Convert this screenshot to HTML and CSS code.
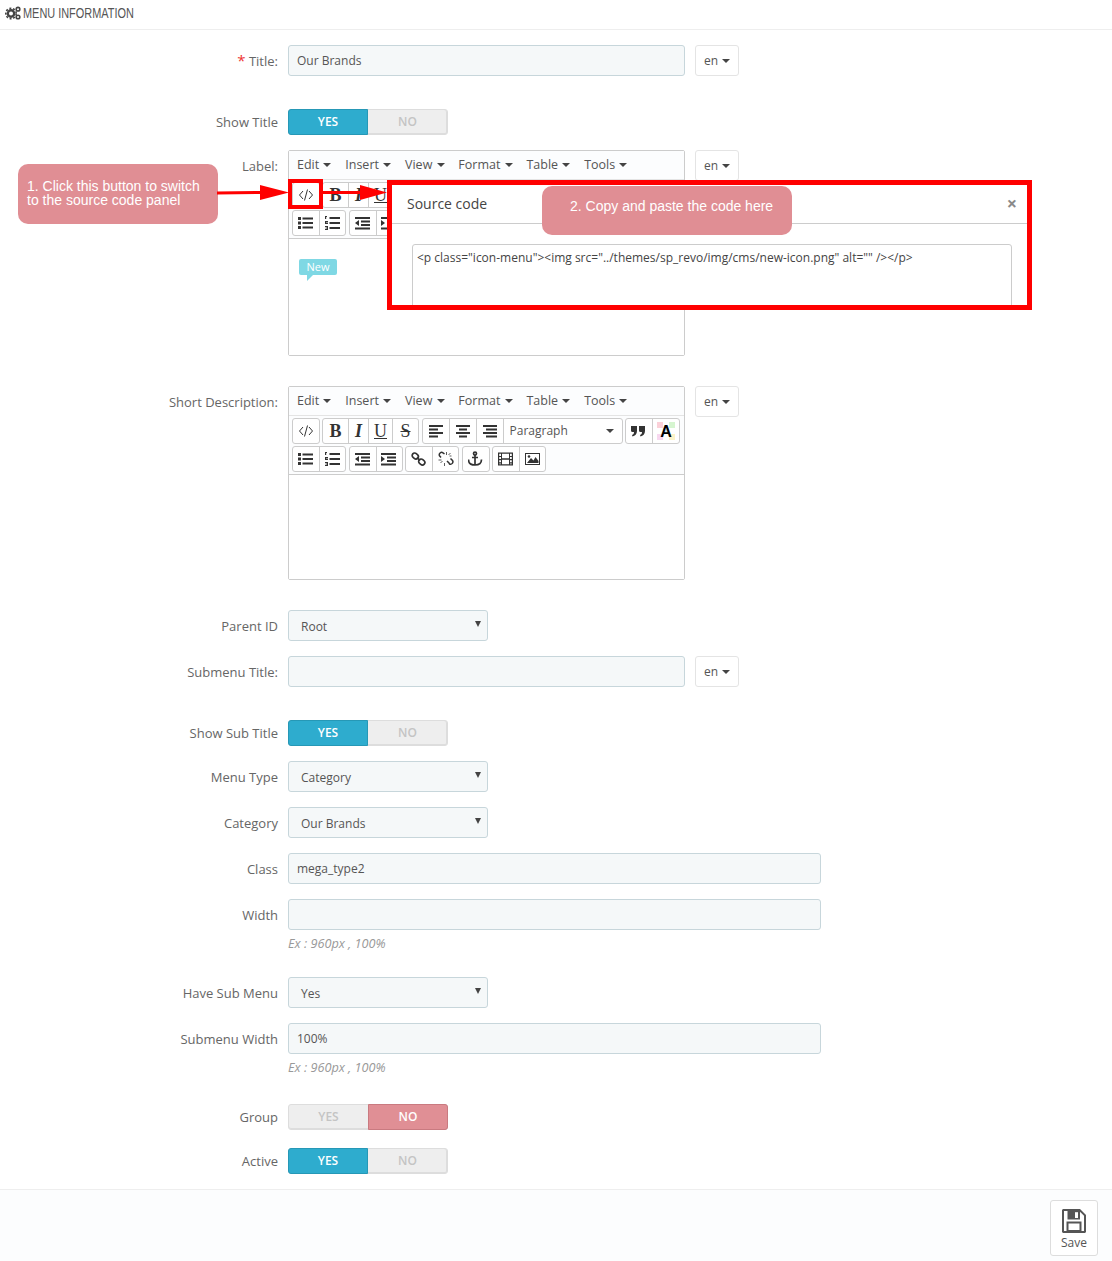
FILE: index.html
```html
<!DOCTYPE html>
<html>
    <head>
        <meta charset="utf-8">
        <title>Menu information</title>
        <link rel="stylesheet" href="styles.css">
    </head>
    <body>
        <svg class="defs" width="0" height="0">
            <symbol id="i-code" viewBox="0 0 16 16"><path d="M5 4 1.500 8 5 12M11 4l3.500 4L11 12M9.500 2.500l-3 11" fill="none" stroke="currentColor" stroke-width="1"/></symbol>
            <symbol id="i-ul" viewBox="0 0 16 16"><path d="M0 2h3v3H0zM0 6.500h3v3H0zM0 11h3v3H0zM4.500 2.500H15v2H4.500zM4.500 7H15v2H4.500zM4.500 11.500H15v2H4.500z"/></symbol>
            <symbol id="i-ol" viewBox="0 0 16 16"><path d="M0 1h2v1H1.200v2H0zM0 6h3v1H1v.6h2V9H0zM0 11h3v4H0v-1h2v-.5H.5v-1H2V12H0zM4.500 2H15v2H4.500zM4.500 7H15v2H4.500zM4.500 12H15v2H4.500z"/></symbol>
            <symbol id="i-left" viewBox="0 0 16 16"><path d="M1 2h14v2H1zM1 5.500h9v2H1zM1 9h14v2H1zM1 12.500h9v2H1z"/></symbol>
            <symbol id="i-center" viewBox="0 0 16 16"><path d="M1 2h14v2H1zM4 5.500h8v2H4zM1 9h14v2H1zM4 12.500h8v2H4z"/></symbol>
            <symbol id="i-right" viewBox="0 0 16 16"><path d="M1 2h14v2H1zM4 5.500h11v2H4zM1 9h14v2H1zM4 12.500h11v2H4z"/></symbol>
            <symbol id="i-outdent" viewBox="0 0 16 16"><path d="M0 2h15v2H0zM6 5.500h9v2H6zM6 9h9v2H6zM0 12.500h15v2H0zM4 5v6L0 8z"/></symbol>
            <symbol id="i-indent" viewBox="0 0 16 16"><path d="M0 2h15v2H0zM6 5.500h9v2H6zM6 9h9v2H6zM0 12.500h15v2H0zM0 5v6l4-3z"/></symbol>
            <symbol id="i-link" viewBox="0 0 16 16"><g fill="none" stroke="currentColor" stroke-width="1.700"><rect x="1" y="2.500" width="6.500" height="5" rx="2.500" transform="rotate(40 4.250 5)"/><rect x="7.500" y="8.500" width="6.500" height="5" rx="2.500" transform="rotate(40 10.750 11)"/><path d="M6 6.500l3 3"/></g></symbol>
            <symbol id="i-unlink" viewBox="0 0 16 16"><g fill="none" stroke="currentColor"><path stroke-width="1.500" d="M6.500 3 5 1.800a2.400 2.400 0 0 0-3.500 3L3 6.500M9 10l2 2 .5 1a2.400 2.400 0 0 0 3-3.500L12.500 7.500"/><path stroke-width=".8" d="M.5 9h3M2.500 12l2-2M8.500 1v3M12.500 2l-2 2M13.500 5h-2M6.500 12v3"/></g></symbol>
            <symbol id="i-anchor" viewBox="0 0 16 16"><g fill="none" stroke="currentColor" stroke-width="1.700"><circle cx="7" cy="2.600" r="1.500"/><path d="M7 4v10M4 6.500h6M.5 8.500c0 4 3 5.500 6.500 5.500s6.500-1.500 6.500-5.500"/></g></symbol>
            <symbol id="i-film" viewBox="0 0 16 16"><path fill-rule="evenodd" d="M0 1.500h15v13H0zm4 1.200v4.600h7V2.700zm0 6v4.600h7V8.700zM1.200 2.700v2.200H3V2.700zm0 3.400v2H3v-2zm0 3.200v2H3v-2zm0 3.200v.8H3v-.8zM12 2.700v2.200h1.800V2.700zm0 3.400v2h1.800v-2zm0 3.200v2h1.800v-2zm0 3.200v.8h1.800v-.8z"/></symbol>
            <symbol id="i-image" viewBox="0 0 16 16"><path fill-rule="evenodd" d="M0 2h15v12H0zm1 1v10h13V3z"/><path d="M2 12 6 7l2.500 2.500L10.500 6l3 4v2z"/><circle cx="4" cy="5.500" r="1.300"/></symbol>
            <symbol id="i-quote" viewBox="0 0 16 16"><path d="M0 3h6v5c0 3-2 5-4.500 5.500L1 12c1.500-.5 2-1.500 2-3H1.500A1.500 1.500 0 0 1 0 7.500zM8 3h6v5c0 3-2 5-4.500 5.500L9 12c1.500-.5 2-1.500 2-3H9.500A1.500 1.500 0 0 1 8 7.500z"/></symbol>
            <symbol id="i-save" viewBox="0 0 24 24">
                <path d="M1 0h17l6 6v17l-1 1H1l-1-1V1z"/>
                <path fill="#fff" d="M2 2h15.200L22 6.800V22H2z"/>
                <path d="M5.500 2h12.500v8.500H5.500z"/>
                <path fill="#fff" d="M13 3.200h3V9h-3z"/>
                <path d="M4.500 12.500h15V22h-15z"/>
                <path fill="#fff" d="M6.500 14.500h11V21h-11z"/>
            </symbol>
        </svg>

        <div class="panel-heading">
            <svg class="cogs" width="16" height="14" viewBox="0 0 16 14">
                <circle cx="6" cy="7.500" r="3.200" fill="none" stroke="#444" stroke-width="2.400"/>
                <circle cx="6" cy="7.500" r="5.200" fill="none" stroke="#444" stroke-width="1.600" stroke-dasharray="2 1.700"/>
                <circle cx="13" cy="3.200" r="1.800" fill="none" stroke="#444" stroke-width="1.600"/>
                <circle cx="13" cy="11" r="1.800" fill="none" stroke="#444" stroke-width="1.600"/>
            </svg>
            <span class="heading-text">MENU INFORMATION</span>
        </div>

        <div class="form">
            <div class="row row-gap">
                <label class="lbl"><span class="req">*</span> Title:</label>
                <div class="input wide-s">Our Brands</div>
                <div class="lang">en <i class="caret"></i></div>
            </div>

            <div class="row">
                <label class="lbl lbl-sw">Show Title</label>
                <div class="switch"><span class="on">YES</span><span>NO</span></div>
            </div>

            <div class="row row-big">
                <label class="lbl">Label:</label>
                <div class="editor">
                    <div class="menubar">
                        <span>Edit <i class="caret"></i></span>
                        <span>Insert <i class="caret"></i></span>
                        <span>View <i class="caret"></i></span>
                        <span>Format <i class="caret"></i></span>
                        <span>Table <i class="caret"></i></span>
                        <span>Tools <i class="caret"></i></span>
                    </div>
                    <div class="toolbar">
                        <div class="tb-row">
                            <div class="group"><b class="tb tb-code"><svg><use href="#i-code"/></svg></b></div>
                            <div class="group">
                                <b class="tb tb-b txt">B</b>
                                <b class="tb tb-i txt">I</b>
                                <b class="tb tb-u txt">U</b>
                            </div>
                        </div>
                        <div class="tb-row">
                            <div class="group">
                                <b class="tb"><svg><use href="#i-ul"/></svg></b>
                                <b class="tb"><svg><use href="#i-ol"/></svg></b>
                            </div>
                            <div class="group">
                                <b class="tb"><svg><use href="#i-outdent"/></svg></b>
                                <b class="tb"><svg><use href="#i-indent"/></svg></b>
                            </div>
                        </div>
                    </div>
                    <div class="edit-area edit-label">
                        <span class="badge-new">New</span>
                    </div>
                </div>
                <div class="lang lang-label">en <i class="caret"></i></div>
            </div>

            <div class="row row-big">
                <label class="lbl">Short Description:</label>
                <div class="editor">
                    <div class="menubar">
                        <span>Edit <i class="caret"></i></span>
                        <span>Insert <i class="caret"></i></span>
                        <span>View <i class="caret"></i></span>
                        <span>Format <i class="caret"></i></span>
                        <span>Table <i class="caret"></i></span>
                        <span>Tools <i class="caret"></i></span>
                    </div>
                    <div class="toolbar">
                        <div class="tb-row">
                            <div class="group"><b class="tb tb-code"><svg><use href="#i-code"/></svg></b></div>
                            <div class="group">
                                <b class="tb tb-b txt">B</b>
                                <b class="tb tb-i txt">I</b>
                                <b class="tb tb-u txt">U</b>
                                <b class="tb tb-s txt">S</b>
                            </div>
                            <div class="group">
                                <b class="tb tb-w"><svg><use href="#i-left"/></svg></b>
                                <b class="tb tb-w"><svg><use href="#i-center"/></svg></b>
                                <b class="tb tb-w"><svg><use href="#i-right"/></svg></b>
                                <span class="tb-select">Paragraph <i class="caret"></i></span>
                            </div>
                            <div class="group">
                                <b class="tb tb-w"><svg><use href="#i-quote"/></svg></b>
                                <b class="tb tb-w tb-color"><span>A</span></b>
                            </div>
                        </div>
                        <div class="tb-row">
                            <div class="group">
                                <b class="tb"><svg><use href="#i-ul"/></svg></b>
                                <b class="tb"><svg><use href="#i-ol"/></svg></b>
                            </div>
                            <div class="group">
                                <b class="tb"><svg><use href="#i-outdent"/></svg></b>
                                <b class="tb"><svg><use href="#i-indent"/></svg></b>
                            </div>
                            <div class="group">
                                <b class="tb"><svg><use href="#i-link"/></svg></b>
                                <b class="tb"><svg><use href="#i-unlink"/></svg></b>
                            </div>
                            <div class="group">
                                <b class="tb"><svg><use href="#i-anchor"/></svg></b>
                            </div>
                            <div class="group">
                                <b class="tb"><svg><use href="#i-film"/></svg></b>
                                <b class="tb"><svg><use href="#i-image"/></svg></b>
                            </div>
                        </div>
                    </div>
                    <div class="edit-area edit-short"></div>
                </div>
                <div class="lang">en <i class="caret"></i></div>
            </div>

            <div class="row">
                <label class="lbl">Parent ID</label>
                <div class="select">Root</div>
            </div>

            <div class="row row-gap">
                <label class="lbl">Submenu Title:</label>
                <div class="input wide-s"></div>
                <div class="lang">en <i class="caret"></i></div>
            </div>

            <div class="row">
                <label class="lbl lbl-sw">Show Sub Title</label>
                <div class="switch"><span class="on">YES</span><span>NO</span></div>
            </div>

            <div class="row">
                <label class="lbl">Menu Type</label>
                <div class="select">Category</div>
            </div>

            <div class="row">
                <label class="lbl">Category</label>
                <div class="select">Our Brands</div>
            </div>

            <div class="row">
                <label class="lbl">Class</label>
                <div class="input wide-l">mega_type2</div>
            </div>

            <div class="row row-help">
                <label class="lbl">Width</label>
                <div>
                    <div class="input wide-l"></div>
                    <p class="help">Ex : 960px , 100%</p>
                </div>
            </div>

            <div class="row">
                <label class="lbl">Have Sub Menu</label>
                <div class="select">Yes</div>
            </div>

            <div class="row row-help2">
                <label class="lbl">Submenu Width</label>
                <div>
                    <div class="input wide-l">100%</div>
                    <p class="help">Ex : 960px , 100%</p>
                </div>
            </div>

            <div class="row row-sw">
                <label class="lbl lbl-sw">Group</label>
                <div class="switch"><span>YES</span><span class="off">NO</span></div>
            </div>

            <div class="row">
                <label class="lbl lbl-sw">Active</label>
                <div class="switch"><span class="on">YES</span><span>NO</span></div>
            </div>
        </div>

        <div class="panel-footer">
            <div class="save">
                <svg width="24" height="24"><use href="#i-save"/></svg>
                <span>Save</span>
            </div>
        </div>

        <!-- annotations drawn over the form -->
        <div class="mark-btn"></div>
        <div class="note note-one">1. Click this button to switch<br>to the source code panel</div>
        <svg class="arrows" width="175" height="20" viewBox="0 0 175 20">
            <path d="M0 6.500l43-.5V0l29 7.500L43 15V9L0 9.500z" fill="#f00"/>
            <path d="M105 6h38V0l27 7.500L143 15V9h-38z" fill="#f00"/>
        </svg>
        <div class="source">
            <div class="source-head">
                <span>Source code</span>
                <span class="source-close">×</span>
            </div>
            <div class="source-body">
                <div class="source-text">&lt;p class="icon-menu"&gt;&lt;img src="../themes/sp_revo/img/cms/new-icon.png" alt="" /&gt;&lt;/p&gt;</div>
            </div>
        </div>
        <div class="note note-two">2. Copy and paste the code here</div>
    </body>
</html>
```

FILE: styles.css
```css
body{
    margin: 0;
    background: white;
    color: #555;
    font-family: 'Open Sans', sans-serif;
    font-size: 13px;
    position: relative;
    height: 1261px;
    overflow: hidden;
}
.defs{
    position: absolute;
}

.panel-heading{
    height: 26px;
    padding: 0 0 3px 5px;
    border-bottom: solid 1px #eee;
    display: flex;
    align-items: center;
    gap: 2px;
}
/* no condensed font here, so squeeze the narrow one */
.heading-text{
    display: inline-block;
    font-family: 'Liberation Sans', sans-serif;
    font-size: 14px;
    color: #555;
    transform: scaleX(0.78);
    transform-origin: left center;
}

.form{
    padding-top: 15px;
}
.row{
    display: flex;
    align-items: flex-start;
    margin-bottom: 15px;
}
.row-gap{
    margin-bottom: 33px;
}
.row-big{
    margin-bottom: 30px;
}
.row-help{
    margin-bottom: 25px;
}
.row-help2{
    margin-bottom: 28px;
}
.row-sw{
    margin-bottom: 18px;
}

.lbl{
    width: 278px;
    margin-right: 10px;
    flex-shrink: 0;
    text-align: right;
    line-height: 18px;
    padding-top: 7px;
    color: #666;
}
.lbl-sw{
    padding-top: 4px;
}
.req{
    color: #e33;
    font-size: 15px;
    line-height: 0;
}

.input{
    height: 31px;
    box-sizing: border-box;
    background: #f5f8f9;
    border: solid 1px #c7d6db;
    border-radius: 3px;
    padding: 0 8px;
    font-size: 12px;
    line-height: 29px;
    color: #555;
}
.wide-s{
    width: 397px;
}
.wide-l{
    width: 533px;
}
.select{
    width: 200px;
    height: 31px;
    box-sizing: border-box;
    background: #f5f8f9;
    border: solid 1px #c7d6db;
    border-radius: 3px;
    padding: 0 12px;
    font-size: 12px;
    line-height: 31px;
    position: relative;
}
.select::after{
    content: "";
    position: absolute;
    right: 6px;
    top: 10px;
    border-left: 3px solid transparent;
    border-right: 3px solid transparent;
    border-top: 6px solid #444;
}
.lang{
    width: 44px;
    height: 31px;
    box-sizing: border-box;
    margin-left: 10px;
    border: solid 1px #e4e4e4;
    border-radius: 3px;
    text-align: center;
    font-size: 12px;
    line-height: 29px;
    background: white;
}
.lang-label{
    line-height: 30px;
}
.caret{
    display: inline-block;
    vertical-align: 2px;
    margin-left: 1px;
    border-left: 4px solid transparent;
    border-right: 4px solid transparent;
    border-top: 4px solid #444;
}
.help{
    margin: 4px 0 0 0;
    line-height: 18px;
    font-size: 12.700px;
    font-style: italic;
    color: #999;
}

.switch{
    display: flex;
    width: 160px;
    height: 26px;
    box-sizing: border-box;
    border-radius: 3px;
    background: #eee;
    border: solid 1px #ddd;
    box-shadow: inset 0 -1px 0 #ddd, inset -1px 0 0 #ddd;
    font-size: 12px;
    font-weight: 600;
    color: #c4c4c4;
    line-height: 23px;
    text-align: center;
}
.switch span{
    width: 79px;
    box-sizing: border-box;
}
.switch .on{
    width: 80px;
    margin: -1px 0 -1px -1px;
    background: #2eacce;
    border: solid 1px #2698b6;
    border-radius: 3px 0 0 3px;
    color: white;
}
.switch .off{
    width: 80px;
    margin: -1px -1px -1px 0;
    background: #e08f95;
    border: solid 1px #c97a80;
    border-radius: 0 3px 3px 0;
    color: white;
}

.editor{
    width: 397px;
    box-sizing: border-box;
    border: solid 1px #ccc;
    border-radius: 2px;
    flex-shrink: 0;
}
.menubar{
    height: 29px;
    display: flex;
    align-items: center;
    gap: 13.800px;
    padding: 0 0 2px 8px;
    background: #fcfdfe;
    border-bottom: solid 1px #e4e4e4;
    box-sizing: border-box;
    font-size: 12.500px;
}
.menubar .caret{
    margin-left: 1px;
}
.toolbar{
    padding: 2px 3px 0 3px;
    border-bottom: solid 1px #ccc;
    background: #fcfdfe;
}
.tb-row{
    display: flex;
    gap: 2.500px;
    margin-bottom: 2px;
}
.group{
    display: flex;
    height: 26px;
    box-sizing: border-box;
    border: solid 1px #ccc;
    border-radius: 3px;
    background: white;
}
.tb{
    width: 26px;
    height: 24px;
    box-sizing: border-box;
    border-left: solid 1px #ccc;
    display: flex;
    align-items: center;
    justify-content: center;
    color: #333;
    font-weight: normal;
}
.tb:first-child{
    border-left: none;
}
.tb svg{
    width: 16px;
    height: 16px;
    fill: currentColor;
}
.tb-code{
    width: 25.500px;
}
.tb-w{
    width: 27px;
}
.tb-w:first-child{
    width: 26px;
}
.txt{
    font-family: 'Liberation Serif', serif;
    font-size: 18px;
    font-weight: bold;
}
.tb-b{
    width: 25px;
}
.tb-i{
    width: 20px;
    font-style: italic;
}
.tb-u{
    width: 24px;
    font-weight: normal;
    text-decoration: underline;
}
.tb-s{
    width: 26px;
    font-weight: normal;
    text-decoration: line-through;
}
.tb-select{
    width: 119px;
    box-sizing: border-box;
    border-left: solid 1px #ccc;
    padding: 0 8px 0 6px;
    display: flex;
    align-items: center;
    justify-content: space-between;
    font-size: 12px;
    line-height: 24px;
}
.tb-color span{
    width: 18px;
    height: 18px;
    font-family: 'Liberation Sans', sans-serif;
    font-size: 16px;
    font-weight: bold;
    line-height: 19px;
    text-align: center;
    color: black;
    background:
        linear-gradient(90deg, #fbd0d8 0 33%, #fff 33% 66%, #d6f5d0 66%) top / 100% 6px no-repeat,
        linear-gradient(90deg, #fff 0 33%, #cfe6fb 33% 66%, #fff 66%) center / 100% 6px no-repeat,
        linear-gradient(90deg, #f8d8f0 0 33%, #fff 33% 66%, #fbf3c8 66%) bottom / 100% 6px no-repeat;
}
.edit-area{
    background: white;
}
.edit-label{
    height: 116px;
    padding: 20px 10px 0 10px;
    box-sizing: border-box;
    display: flex;
    align-items: flex-start;
}
.edit-short{
    height: 104px;
}
.badge-new{
    position: relative;
    width: 38px;
    height: 16px;
    background: #7fd8e4;
    border-radius: 2px;
    color: white;
    font-size: 11px;
    line-height: 16px;
    text-align: center;
}
.badge-new::after{
    content: "";
    position: absolute;
    left: 8px;
    top: 16px;
    border-top: 6px solid #7fd8e4;
    border-right: 6px solid transparent;
}

.panel-footer{
    position: absolute;
    left: 0;
    right: 0;
    top: 1189px;
    height: 72px;
    box-sizing: border-box;
    background: #fcfdfe;
    border-top: solid 1px #eee;
    display: flex;
    justify-content: flex-end;
    padding: 10px 14px 0 0;
}
.save{
    width: 48px;
    height: 56px;
    box-sizing: border-box;
    border: solid 1px #ddd;
    border-radius: 3px;
    background: white;
    display: flex;
    flex-direction: column;
    align-items: center;
    padding-top: 8px;
    font-size: 12px;
    color: #555;
    fill: #555;
}
.save span{
    line-height: 18px;
    margin-top: 1px;
}

.mark-btn{
    position: absolute;
    left: 288px;
    top: 179px;
    width: 35px;
    height: 30px;
    box-sizing: border-box;
    border: solid 4px #f00;
}
.note{
    position: absolute;
    background: #e08e94;
    color: white;
    font-family: 'Liberation Sans', sans-serif;
    font-size: 14px;
    line-height: 14px;
    border-radius: 10px;
    box-sizing: border-box;
}
.note-one{
    left: 18px;
    top: 164px;
    width: 200px;
    height: 60px;
    padding: 15px 0 0 9px;
}
.note-two{
    left: 542px;
    top: 186px;
    width: 250px;
    height: 49px;
    padding: 13px 0 0 28px;
}
.arrows{
    position: absolute;
    left: 217px;
    top: 185px;
}
.source{
    position: absolute;
    left: 387px;
    top: 180px;
    width: 645px;
    height: 130px;
    box-sizing: border-box;
    border: solid 5px #f00;
    background: white;
    overflow: hidden;
}
.source-head{
    height: 39px;
    box-sizing: border-box;
    border-bottom: solid 1px #ccc;
    padding: 0 15px 2px 15px;
    display: flex;
    align-items: center;
    justify-content: space-between;
    font-size: 14px;
    color: #444;
}
.source-close{
    font-size: 18px;
    font-weight: bold;
    color: #8a8a8a;
    margin-right: -5px;
}
.source-body{
    padding: 20px 15px 0 20px;
}
.source-text{
    height: 90px;
    border: solid 1px #ccc;
    border-radius: 3px;
    padding: 4px 4px;
    font-size: 12px;
    line-height: 17px;
    color: #444;
}
```
